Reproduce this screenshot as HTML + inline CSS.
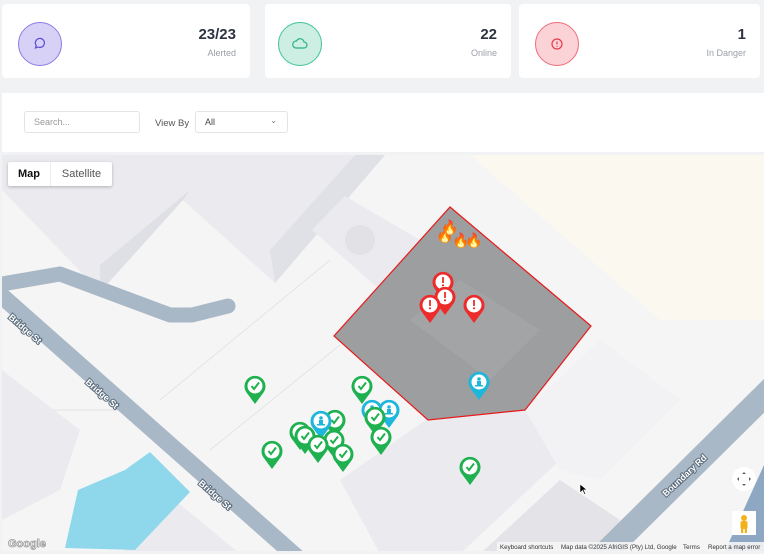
<!DOCTYPE html>
<html><head><meta charset="utf-8"><style>
body{margin:0;width:764px;height:554px;background:#f1f2f4;font-family:"Liberation Sans",sans-serif;position:relative;overflow:hidden}
.card{position:absolute;top:4px;height:74px;background:#fff;border-radius:4px}
.circ{position:absolute;left:16px;top:18px;width:44px;height:44px;border-radius:50%;box-sizing:border-box}
.num{position:absolute;right:14px;top:22px;font-size:15px;font-weight:bold;color:#2d3340}
.lab{position:absolute;right:14px;top:44px;font-size:9px;color:#9a9ea6}
.panel{position:absolute;left:2px;top:93px;width:762px;height:59px;background:#fff}
.inp{position:absolute;top:18px;height:22px;border:1px solid #e2e4e8;border-radius:3px;box-sizing:border-box;font-size:9px;color:#666;line-height:20px;padding-left:9px}
</style></head><body>
<div class="card" style="left:2px;width:248px"><div class="circ" style="background:#d6d1f5;border:1px solid #8a7be8"><svg width="42" height="42" viewBox="0 0 42 42"><path d="M16.5 25 L17.2 22.5 A4.5 4.5 0 1 1 19 24 Z" fill="none" stroke="#5b49d6" stroke-width="1.2"/></svg></div><div class="num">23/23</div><div class="lab">Alerted</div></div>
<div class="card" style="left:265px;width:246px"><div class="circ" style="left:13px;background:#cdeee2;border:1px solid #3fc493"><svg width="42" height="42" viewBox="0 0 42 42"><path d="M17 25 h8 a3 3 0 0 0 0-6 a4 4 0 0 0-7.5-1 a3.5 3.5 0 0 0-0.5 7z" fill="none" stroke="#2bb283" stroke-width="1.2"/></svg></div><div class="num">22</div><div class="lab">Online</div></div>
<div class="card" style="left:519px;width:241px"><div class="circ" style="background:#fbd3d7;border:1px solid #ef6b78"><svg width="42" height="42" viewBox="0 0 42 42"><circle cx="21" cy="21" r="5" fill="none" stroke="#e5394b" stroke-width="1.2"/><path d="M21 18.5v3" stroke="#e5394b" stroke-width="1.2"/><circle cx="21" cy="23.4" r=".6" fill="#e5394b"/></svg></div><div class="num">1</div><div class="lab">In Danger</div></div>
<div class="panel">
<div class="inp" style="left:22px;width:116px;color:#999">Search...</div>
<div style="position:absolute;left:153px;top:25px;font-size:9.5px;color:#555">View By</div>
<div class="inp" style="left:193px;width:93px;color:#444">All<span style="position:absolute;right:10px;top:-1px;font-size:8px;color:#777">&#8964;</span></div>
</div>
<svg style="position:absolute;left:2px;top:155px" width="762" height="396" viewBox="2 155 762 396">
<defs>
<g id="pin"><path d="M0 17 L-8.5 5.5 A10.5 10.5 0 1 1 8.5 5.5 Z"/><circle cx="0" cy="-1" r="7.5" fill="#fff"/></g>
<g id="g"><use href="#pin" fill="#1fb14f"/><path d="M-3.5 -1 L-1 2 L4 -4.5" fill="none" stroke="#1fb14f" stroke-width="2"/></g>
<g id="b"><use href="#pin" fill="#1fb6dc"/><circle cx="0" cy="-4" r="1.8" fill="#1fb6dc"/><rect x="-2" y="-2" width="4" height="4" fill="#1fb6dc"/><rect x="-4" y="2" width="8" height="1.5" fill="#1fb6dc"/></g>
<g id="r"><use href="#pin" fill="#ee2b2b"/><rect x="-0.9" y="-6" width="1.8" height="6" fill="#ee2b2b"/><circle cx="0" cy="2.3" r="1.1" fill="#ee2b2b"/></g>
</defs>
<rect x="0" y="150" width="764" height="410" fill="#f5f5f5"/>
<polygon points="470,155 764,155 764,320 660,320" fill="#fbf8f0"/>
<g stroke="#e4e4e6" stroke-width="1" fill="none">
<path d="M2 300 L170 450 L300 554"/><path d="M160 400 L330 260"/><path d="M210 450 L340 345"/><path d="M2 410 L130 410"/>
</g>
<polygon points="2,155 385,155 275,283 183,200 100,292 2,190" fill="#ebebef"/>
<polygon points="100,292 183,200 190,190 100,265" fill="#dfe0e5"/>
<polygon points="275,283 385,155 355,155 270,250" fill="#e0e1e6"/>
<polygon points="312,230 345,196 420,240 380,290" fill="#ebebef"/>
<circle cx="360" cy="240" r="15" fill="#e2e2e6"/>
<polygon points="2,370 80,430 60,490 2,520" fill="#ebebef"/>
<polygon points="120,554 175,500 240,554" fill="#ebebef"/>
<polygon points="340,480 440,410 600,390 560,460 460,554 380,554" fill="#ebebef"/>
<polygon points="525,410 600,340 680,400 600,480 560,470" fill="#f2f2f4"/>
<polygon points="480,554 560,480 620,520 600,554" fill="#e3e3e8"/>
<polygon points="65,548 78,490 125,470 150,452 190,492 135,550" fill="#8fd8ec"/>
<path d="M2 284 L60 274 L170 315 L192 315 L228 306" stroke="#a9b8c6" stroke-width="15" stroke-linecap="round" stroke-linejoin="round" fill="none"/>
<path d="M-5 290 L300 560" stroke="#a9b8c6" stroke-width="17" fill="none"/>
<path d="M598 560 L775 385" stroke="#a9b8c6" stroke-width="24" fill="none"/>
<polygon points="764,465 764,551 725,551" fill="#8ea7c2"/>
<g font-size="9" font-weight="bold" fill="#fff" stroke="#5a6b7c" stroke-width="2" paint-order="stroke">
<text transform="translate(8,318) rotate(41)">Bridge St</text>
<text transform="translate(85,383) rotate(41)">Bridge St</text>
<text transform="translate(198,484) rotate(41)">Bridge St</text>
<text transform="translate(666,497) rotate(-43)">Boundary Rd</text>
</g>
<polygon points="450,207 591,326 525,410 428,420 334,336" fill="#9d9ea0" stroke="#e81a1a" stroke-width="1.2"/>
<polygon points="410,320 460,280 540,330 490,380" fill="#a5a6a8" opacity=".7"/>
<g font-size="14"><text x="436" y="240">🔥</text><text x="452" y="245">🔥</text><text x="465" y="245">🔥</text><text x="441" y="232">🔥</text></g>
<use href="#r" x="443" y="283"/><use href="#r" x="445" y="298"/><use href="#r" x="430" y="306"/><use href="#r" x="474" y="306"/>
<use href="#b" x="479" y="383"/>
<use href="#g" x="255" y="387"/><use href="#g" x="362" y="387"/><use href="#g" x="300" y="433"/><use href="#g" x="335" y="421"/><use href="#g" x="305" y="437"/>
<use href="#b" x="321" y="422"/><use href="#b" x="372" y="411"/><use href="#b" x="389" y="411"/>
<use href="#g" x="334" y="441"/><use href="#g" x="318" y="446"/><use href="#g" x="343" y="455"/><use href="#g" x="375" y="418"/><use href="#g" x="381" y="438"/><use href="#g" x="272" y="452"/><use href="#g" x="470" y="468"/>
<path d="M580 484 v9 l2.5-2.5 l2 4 l1.2-.6 l-2-4 h3.3z" fill="#000" stroke="#fff" stroke-width=".6"/>
<circle cx="744" cy="479" r="12" fill="#fff"/>
<path d="M744 472 l-2 2 h4z M744 486 l-2-2 h4z M737 479 l2-2 v4z M751 479 l-2-2 v4z" fill="#666"/>
<rect x="732" y="511" width="24" height="24" fill="#fff"/>
<circle cx="744" cy="518" r="3" fill="#f3b11b"/><rect x="740.5" y="521" width="7" height="8" rx="2" fill="#f3b11b"/><rect x="741" y="528" width="2.3" height="5" fill="#f3b11b"/><rect x="744.7" y="528" width="2.3" height="5" fill="#f3b11b"/>
<rect x="497" y="542" width="267" height="9" fill="#f5f5f5" opacity=".9"/>
<g font-size="6.2" fill="#333"><text x="500" y="549">Keyboard shortcuts</text><text x="561" y="549">Map data ©2025 AfriGIS (Pty) Ltd, Google</text><text x="683" y="549">Terms</text><text x="708" y="549">Report a map error</text></g>
<text x="8" y="547" font-size="11" font-weight="bold" fill="#fff" stroke="#9a9a9a" stroke-width=".8">Google</text>
</svg>
<div style="position:absolute;left:8px;top:162px;width:104px;height:24px;background:#fff;box-shadow:0 1px 3px rgba(0,0,0,.25);border-radius:2px;font-size:11px">
<div style="position:absolute;left:0;width:42px;text-align:center;line-height:24px;font-weight:bold;color:#111">Map</div>
<div style="position:absolute;left:42px;width:1px;height:24px;background:#eee"></div>
<div style="position:absolute;left:43px;width:61px;text-align:center;line-height:24px;color:#555">Satellite</div>
</div>
</body></html>
